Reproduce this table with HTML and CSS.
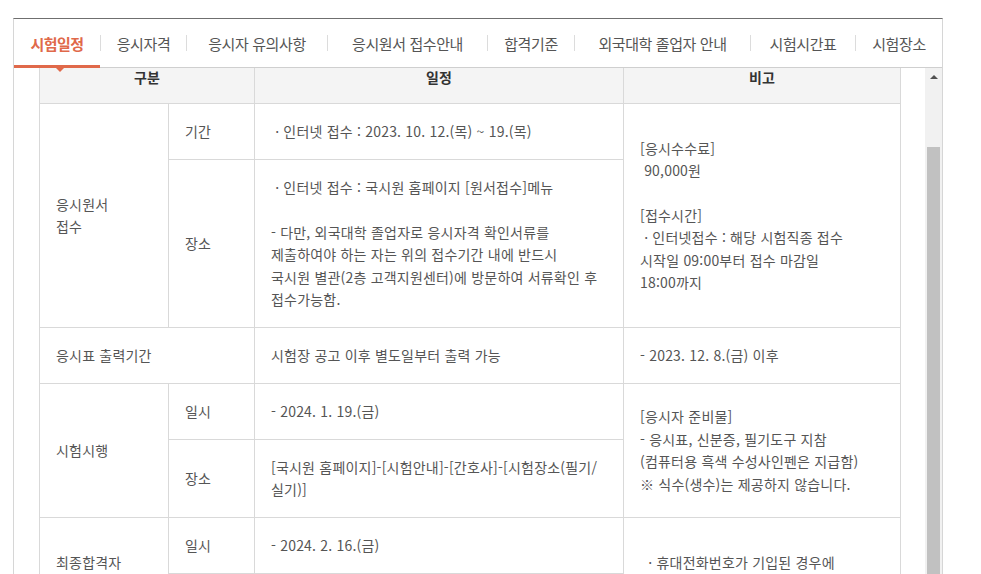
FILE: index.html
```html
<!DOCTYPE html>
<html lang="ko">
<head>
<meta charset="utf-8">
<title>시험일정</title>
<link rel="stylesheet" href="styles.css">
</head>
<body>
<div class="page">
  <div class="box">
    <nav class="tabs">
      <a class="tab tab-1 is-active">시험일정</a><i class="sep"></i>
      <a class="tab tab-2">응시자격</a><i class="sep"></i>
      <a class="tab tab-3">응시자 유의사항</a><i class="sep"></i>
      <a class="tab tab-4">응시원서 접수안내</a><i class="sep"></i>
      <a class="tab tab-5">합격기준</a><i class="sep"></i>
      <a class="tab tab-6">외국대학 졸업자 안내</a><i class="sep"></i>
      <a class="tab tab-7">시험시간표</a><i class="sep"></i>
      <a class="tab tab-8">시험장소</a>
    </nav>
    <div class="viewport">
      <div class="content">
        <table class="schedule">
          <colgroup>
            <col class="c1"><col class="c2"><col class="c3"><col class="c4">
          </colgroup>
          <thead>
            <tr><th colspan="2">구분</th><th>일정</th><th>비고</th></tr>
          </thead>
          <tbody>
            <tr>
              <td rowspan="2">응시원서<br>접수</td>
              <td>기간</td>
              <td>&nbsp;· 인터넷 접수 : 2023. 10. 12.(목) ~ 19.(목)</td>
              <td rowspan="2">[응시수수료]<br>&nbsp;90,000원<br><br>[접수시간]<br>&nbsp;· 인터넷접수 : 해당 시험직종 접수<br>시작일 09:00부터 접수 마감일<br>18:00까지</td>
            </tr>
            <tr>
              <td>장소</td>
              <td>&nbsp;· 인터넷 접수 : 국시원 홈페이지 [원서접수]메뉴<br><br>- 다만, 외국대학 졸업자로 응시자격 확인서류를<br>제출하여야 하는 자는 위의 접수기간 내에 반드시<br>국시원 별관(2층 고객지원센터)에 방문하여 서류확인 후<br>접수가능함.</td>
            </tr>
            <tr>
              <td colspan="2">응시표 출력기간</td>
              <td>시험장 공고 이후 별도일부터 출력 가능</td>
              <td>- 2023. 12. 8.(금) 이후</td>
            </tr>
            <tr>
              <td rowspan="2">시험시행</td>
              <td>일시</td>
              <td>- 2024. 1. 19.(금)</td>
              <td rowspan="2">[응시자 준비물]<br>- 응시표, 신분증, 필기도구 지참<br>(컴퓨터용 흑색 수성사인펜은 지급함)<br>※ 식수(생수)는 제공하지 않습니다.</td>
            </tr>
            <tr>
              <td>장소</td>
              <td>[국시원 홈페이지]-[시험안내]-[간호사]-[시험장소(필기/<br>실기)]</td>
            </tr>
            <tr>
              <td rowspan="2">최종합격자<br>발표</td>
              <td>일시</td>
              <td>- 2024. 2. 16.(금)</td>
              <td rowspan="2">&nbsp;&nbsp;· 휴대전화번호가 기입된 경우에<br>SMS 통보</td>
            </tr>
            <tr>
              <td>방법</td>
              <td>국시원 홈페이지 [합격자조회] 메뉴</td>
            </tr>
          </tbody>
        </table>
      </div>
      <div class="scrollbar">
        <div class="sb-btn"><span class="sb-arrow"></span></div>
        <div class="sb-gap"></div>
        <div class="sb-thumb"></div>
      </div>
    </div>
  </div>
</div>
</body>
</html>
```

FILE: styles.css
```css
html, body {
  margin: 0;
  padding: 0;
  background: #fff;
  overflow: hidden;
}

body {
  font-family: "Noto Sans CJK KR", "Noto Sans", sans-serif;
  color: #555;
}

.page {
  padding: 18px 0 0 13px;
  height: 556px;
}

.box {
  width: 928px;
  border-top: 1px solid #6f6f6f;
  border-left: 1px solid #d6d6d6;
  border-right: 1px solid #d6d6d6;
}

/* tabs */
.tabs {
  display: flex;
  align-items: center;
  height: 48px;
  border-bottom: 1px solid #cfcfcf;
}

.tab {
  position: relative;
  display: flex;
  align-items: center;
  justify-content: center;
  box-sizing: border-box;
  height: 48px;
  font-size: 15px;
  letter-spacing: -0.4px;
  color: #555;
  white-space: nowrap;
  cursor: pointer;
}

.tab-1 { width: 86px; }
.tab-2 { width: 85px; }
.tab-3 { width: 140px; }
.tab-4 { width: 159px; }
.tab-5 { width: 86px; }
.tab-6 { width: 175px; }
.tab-7 { width: 104px; }
.tab-8 { flex: 1; }

.tab.is-active {
  color: #e0694a;
  font-weight: 700;
  letter-spacing: -0.6px;
  height: 49px;
  margin-bottom: -1px;
  border-bottom: 3px solid #e0694a;
  padding-top: 3px;
  z-index: 2;
}

.tab.is-active::after {
  content: "";
  position: absolute;
  left: 42px;
  bottom: -7px;
  border-left: 4px solid transparent;
  border-right: 4px solid transparent;
  border-top: 4px solid #e0694a;
}

.sep {
  width: 1px;
  height: 16px;
  background: #dcdcdc;
  flex: none;
}

/* scroll viewport */
.viewport {
  display: flex;
  height: 506px;
  overflow: hidden;
}

.content {
  flex: 1;
  padding-left: 25px;
  overflow: hidden;
}

.schedule {
  width: 861px;
  table-layout: fixed;
  border-collapse: collapse;
  font-size: 14px;
  line-height: 22.4px;
  letter-spacing: 0.2px;
  color: #555;
}

.c1 { width: 129px; }
.c2 { width: 86px; }
.c3 { width: 369px; }
.c4 { width: 277px; }

.schedule th {
  background: #f4f4f4;
  color: #333;
  font-weight: 700;
  text-align: center;
  line-height: 18px;
  padding: 0 16px 17px;
  border: 1px solid #d9d9d9;
  border-top: none;
}

.schedule td {
  padding: 16px 16px 16.5px;
  border: 1px solid #d9d9d9;
  vertical-align: middle;
  text-align: left;
}

/* fake scrollbar */
.scrollbar {
  width: 17px;
  flex: none;
  display: flex;
  flex-direction: column;
  background: #f1f1f1;
}

.sb-btn {
  height: 17px;
  display: flex;
  align-items: center;
  justify-content: center;
}

.sb-arrow {
  width: 0;
  height: 0;
  border-left: 4px solid transparent;
  border-right: 4px solid transparent;
  border-bottom: 4px solid #505050;
}

.sb-gap {
  height: 62px;
}

.sb-thumb {
  flex: 1;
  margin: 0 2px;
  background: #c1c1c1;
}
```
